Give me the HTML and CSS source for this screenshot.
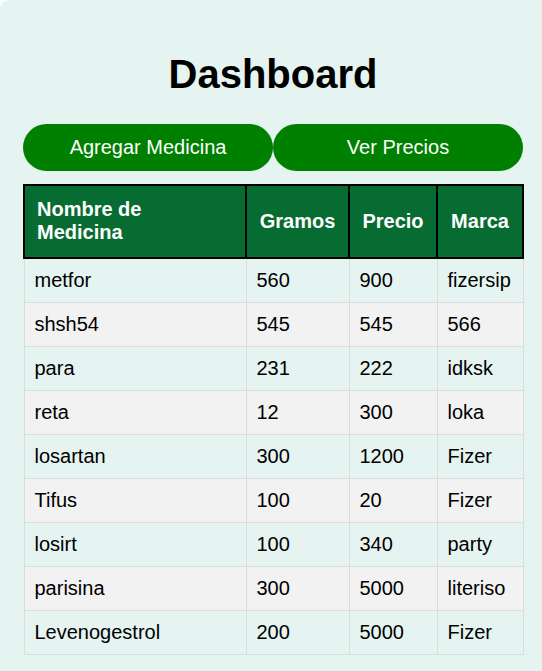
FILE: index.html
```html
<!DOCTYPE html>
<html lang="es">
<head>
<meta charset="utf-8">
<title>Dashboard</title>
<link rel="stylesheet" href="styles.css">
</head>
<body>
<div class="container">
  <h1 class="title">Dashboard</h1>
  <div class="actions">
    <button class="btn">Agregar Medicina</button>
    <button class="btn">Ver Precios</button>
  </div>
  <table class="med-table">
    <thead>
      <tr>
        <th class="col-name">Nombre de Medicina</th>
        <th class="col-grams">Gramos</th>
        <th class="col-price">Precio</th>
        <th class="col-brand">Marca</th>
      </tr>
    </thead>
    <tbody>
      <tr><td>metfor</td><td>560</td><td>900</td><td>fizersip</td></tr>
      <tr><td>shsh54</td><td>545</td><td>545</td><td>566</td></tr>
      <tr><td>para</td><td>231</td><td>222</td><td>idksk</td></tr>
      <tr><td>reta</td><td>12</td><td>300</td><td>loka</td></tr>
      <tr><td>losartan</td><td>300</td><td>1200</td><td>Fizer</td></tr>
      <tr><td>Tifus</td><td>100</td><td>20</td><td>Fizer</td></tr>
      <tr><td>losirt</td><td>100</td><td>340</td><td>party</td></tr>
      <tr><td>parisina</td><td>300</td><td>5000</td><td>literiso</td></tr>
      <tr><td>Levenogestrol</td><td>200</td><td>5000</td><td>Fizer</td></tr>
    </tbody>
  </table>
</div>
</body>
</html>
```

FILE: styles.css
```css
html, body {
  margin: 0;
  padding: 0;
  background: #ffffff;
}

body {
  font-family: "Liberation Sans", Arial, sans-serif;
  color: #000;
}

.container {
  background: #e5f4f1;
  border-top-left-radius: 9px;
  min-height: 671px;
  box-sizing: border-box;
  padding: 24px 19px 16px 23px;
}

.title {
  margin: 27px 0;
  font-size: 40px;
  font-weight: bold;
  text-align: center;
  line-height: 46px;
}

.actions {
  display: flex;
  margin-bottom: 13px;
}

.btn {
  flex: 1;
  background: #008000;
  color: #fff;
  border: none;
  border-radius: 24px;
  font-family: "Liberation Sans", Arial, sans-serif;
  font-size: 20px;
  line-height: 23px;
  padding: 12px 10px;
  cursor: pointer;
}

.med-table {
  width: 500px;
  table-layout: fixed;
  border-collapse: collapse;
  font-size: 20px;
  line-height: 23px;
}

.med-table th {
  background: #076c31;
  color: #fff;
  border: 2px solid #000;
  padding: 12px 12px 13px;
  font-weight: bold;
  text-align: center;
}

.med-table th.col-name {
  text-align: left;
  padding-right: 30px;
}

.col-name { width: 178px; }
.col-grams { width: 77px; }
.col-price { width: 62px; }
.col-brand { width: 60px; }

.med-table td {
  border: 1px solid #dcdcdc;
  padding: 10px 10px 10px 10px;
  text-align: left;
  white-space: nowrap;
}

.med-table tbody tr:nth-child(even) {
  background: #f2f2f2;
}
```
